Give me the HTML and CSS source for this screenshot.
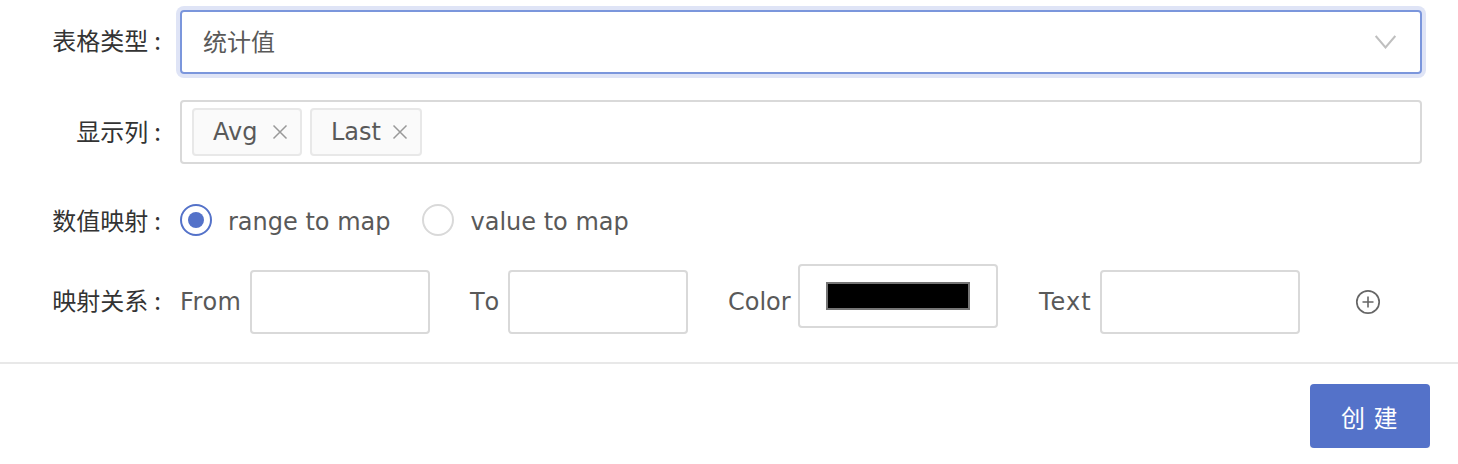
FILE: index.html
```html
<!DOCTYPE html>
<html lang="zh-CN">
<head>
    <meta charset="UTF-8">
    <meta name="viewport" content="width=device-width, initial-scale=1.0">
    <title>创建表格</title>
    <link rel="stylesheet" href="styles.css">
</head>
<body>
    <form class="form">
        <div class="form-row row-type">
            <label class="form-label">表格类型<span class="colon">:</span></label>
            <div class="select-box">
                <span class="select-value">统计值</span>
                <svg class="select-arrow" width="21" height="14" viewBox="0 0 21 14">
                    <path d="M0.7 1 L10.5 12.5 L20.3 1" fill="none" stroke="#bfbfbf" stroke-width="2"/>
                </svg>
            </div>
        </div>
        <div class="form-row row-columns">
            <label class="form-label">显示列<span class="colon">:</span></label>
            <div class="tag-box">
                <span class="tag tag-avg">Avg
                    <svg class="tag-close" width="16" height="16" viewBox="0 0 16 16">
                        <path d="M1.5 1.5 L14.5 14.5 M14.5 1.5 L1.5 14.5" stroke="#999999" stroke-width="1.5"/>
                    </svg>
                </span>
                <span class="tag tag-last">Last
                    <svg class="tag-close" width="16" height="16" viewBox="0 0 16 16">
                        <path d="M1.5 1.5 L14.5 14.5 M14.5 1.5 L1.5 14.5" stroke="#999999" stroke-width="1.5"/>
                    </svg>
                </span>
            </div>
        </div>
        <div class="form-row row-mapping">
            <label class="form-label">数值映射<span class="colon">:</span></label>
            <div class="radio-group">
                <span class="radio checked"></span>
                <span class="radio-text first">range to map</span>
                <span class="radio"></span>
                <span class="radio-text">value to map</span>
            </div>
        </div>
        <div class="form-row row-relation">
            <label class="form-label relation-label">映射关系<span class="colon">:</span></label>
            <div class="relation">
                <span class="field-name from-name">From</span>
                <input type="text" class="text-input narrow">
                <span class="field-name to-name">To</span>
                <input type="text" class="text-input narrow">
                <span class="field-name color-name">Color</span>
                <div class="color-box"><span class="swatch"></span></div>
                <span class="field-name text-name">Text</span>
                <input type="text" class="text-input wide">
                <svg class="add-icon" width="26" height="26" viewBox="0 0 26 26">
                    <circle cx="13" cy="13" r="11.2" fill="none" stroke="#666666" stroke-width="1.7"/>
                    <path d="M13 7.5 V18.5 M7.5 13 H18.5" stroke="#666666" stroke-width="1.6"/>
                </svg>
            </div>
        </div>
        <div class="form-footer">
            <button type="button" class="btn-primary">创 建</button>
        </div>
    </form>
</body>
</html>
```

FILE: styles.css
```css
* {
    margin: 0;
    padding: 0;
    box-sizing: border-box;
}

body {
    background-color: #ffffff;
    font-family: "DejaVu Sans", "Noto Sans CJK SC", sans-serif;
    font-size: 24px;
    color: #595959;
    overflow: hidden;
}

.form {
    padding-top: 10px;
}

.form-row {
    display: flex;
    align-items: center;
    padding-right: 36px;
}

.form-label {
    width: 180px;
    flex-shrink: 0;
    padding-right: 19px;
    text-align: right;
    font-family: "Noto Sans CJK SC", sans-serif;
    color: #333333;
    line-height: 32px;
}

.colon {
    margin-left: 6px;
}

.row-type {
    height: 64px;
}

.row-type .form-label {
    margin-bottom: 4px;
}

.row-columns {
    height: 64px;
    margin-top: 26px;
}

.row-columns .form-label {
    margin-bottom: 2px;
}

.row-mapping {
    height: 32px;
    margin-top: 40px;
}

.row-relation {
    align-items: flex-start;
    margin-top: 28px;
}

.relation-label {
    margin-top: 20px;
}

.select-box {
    flex-grow: 1;
    height: 64px;
    display: flex;
    align-items: center;
    justify-content: space-between;
    padding: 0 24px 0 21px;
    border: 2px solid #7b96dc;
    border-radius: 4px;
    box-shadow: 0 0 0 4px #dfe4f6;
    font-family: "Noto Sans CJK SC", sans-serif;
    color: #595959;
}

.select-value {
    margin-bottom: 4px;
}

.tag-box {
    flex-grow: 1;
    height: 64px;
    display: flex;
    align-items: center;
    gap: 8px;
    padding: 0 10px;
    border: 2px solid #d9d9d9;
    border-radius: 4px;
}

.tag {
    height: 48px;
    display: flex;
    align-items: center;
    justify-content: space-between;
    padding: 0 12px 0 19px;
    background-color: #fafafa;
    border: 2px solid #e8e8e8;
    border-radius: 4px;
    color: #595959;
}

.tag-avg {
    width: 110px;
}

.tag-last {
    width: 112px;
}

.radio-group {
    display: flex;
    align-items: center;
}

.radio {
    width: 32px;
    height: 32px;
    flex-shrink: 0;
    display: flex;
    align-items: center;
    justify-content: center;
    border: 2px solid #d9d9d9;
    border-radius: 50%;
}

.radio.checked {
    border-color: #5472c9;
}

.radio.checked::after {
    content: "";
    width: 16px;
    height: 16px;
    border-radius: 50%;
    background-color: #5472c9;
}

.radio-text {
    margin-left: 16px;
    padding-top: 4px;
}

.radio-text.first {
    margin-right: 32px;
}

.relation {
    flex-grow: 1;
    display: flex;
    align-items: flex-start;
}

.field-name {
    line-height: 64px;
    margin-top: 6px;
}

.from-name {
    width: 70px;
    letter-spacing: 0.5px;
}

.to-name {
    width: 38px;
    margin-left: 40px;
    letter-spacing: 4px;
}

.color-name {
    width: 70px;
    margin-left: 40px;
}

.text-name {
    width: 61px;
    margin-left: 41px;
    letter-spacing: 1px;
}

.text-input {
    height: 64px;
    margin-top: 6px;
    border: 2px solid #d9d9d9;
    border-radius: 4px;
    background-color: #ffffff;
}

.narrow {
    width: 180px;
}

.wide {
    width: 200px;
}

.color-box {
    width: 200px;
    height: 64px;
    display: flex;
    justify-content: center;
    padding-top: 16px;
    border: 2px solid #d9d9d9;
    border-radius: 4px;
}

.swatch {
    width: 144px;
    height: 28px;
    background-color: #000000;
    border: 2px solid #757575;
}

.add-icon {
    margin: 25px 0 0 55px;
}

.form-footer {
    display: flex;
    justify-content: flex-end;
    margin-top: 28px;
    padding: 20px 28px 0 0;
    border-top: 2px solid #e8e8e8;
}

.btn-primary {
    width: 120px;
    height: 64px;
    border: none;
    border-radius: 4px;
    background-color: #5472c9;
    box-shadow: 0 4px 0 #f2f2f2;
    color: #ffffff;
    font-family: "Noto Sans CJK SC", sans-serif;
    font-size: 24px;
    letter-spacing: 1.5px;
}
```
